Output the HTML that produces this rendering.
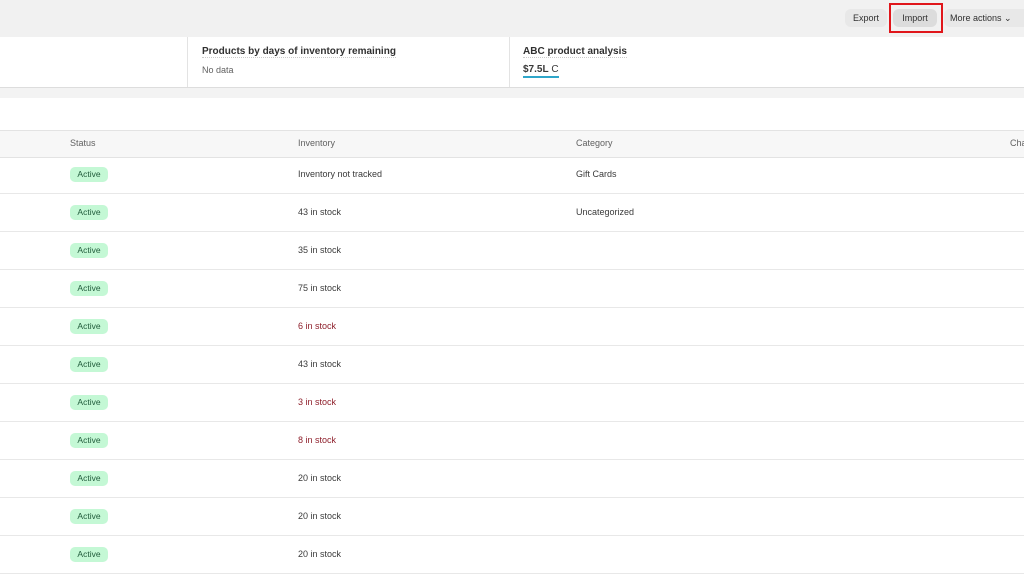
<!DOCTYPE html>
<html><head><style>
body{margin:0;width:1024px;height:574px;overflow:hidden;background:#fff;font-family:"Liberation Sans",sans-serif;font-size:9px;color:#3a3a3a;position:relative}
.a{position:absolute}
.top{left:0;top:0;width:1024px;height:37px;background:#f1f1f1}
.btn{position:absolute;top:9px;height:18px;line-height:18px;border-radius:6px;background:#e3e3e3;font-size:9px;color:#303030;text-align:center}
.card{left:0;top:37px;width:1024px;height:50px;background:#fff;border-bottom:1px solid #ddd}
.gap{left:0;top:88px;width:1024px;height:10px;background:#f3f3f3}
.hdr{left:0;top:130px;width:1024px;height:26px;background:#f7f7f7;border-top:1px solid #e3e3e3;border-bottom:1px solid #e3e3e3}
.row{position:absolute;left:0;width:1024px;height:37px;border-bottom:1px solid #e8e8e8}
.badge{position:absolute;left:70px;top:11px;width:38px;height:15px;line-height:15px;border-radius:5px;background:#c4f8d5;color:#1f5a3a;text-align:center;font-size:8.5px}
.t{position:absolute;top:13px}
.red{color:#8e1f2b}
</style></head><body>
<div class="a top"></div>
<div class="btn" style="left:845px;width:42px;background:#e8e8e8">Export</div>
<div class="btn" style="left:893px;width:44px;background:#dcdcdc">Import</div>
<div class="btn" style="left:944px;width:80px;background:#e8e8e8;text-align:left;padding-left:6px">More actions ⌄</div>
<div class="a" style="left:889px;top:3px;width:54px;height:30px;border:2px solid #e0161b;box-sizing:border-box"></div>
<div class="a card"></div>
<div class="a" style="left:187px;top:37px;width:1px;height:50px;background:#e3e3e3"></div>
<div class="a" style="left:509px;top:37px;width:1px;height:50px;background:#e3e3e3"></div>
<div class="a" style="left:202px;top:46px;font-weight:bold;font-size:10px;color:#303030;border-bottom:1px dotted #ccc">Products by days of inventory remaining</div>
<div class="a" style="left:202px;top:65px;color:#616161">No data</div>
<div class="a" style="left:523px;top:46px;font-weight:bold;font-size:10px;color:#303030;border-bottom:1px dotted #ccc">ABC product analysis</div>
<div class="a" style="left:523px;top:64px;font-size:10px;border-bottom:2px solid #2fa6c9;padding-bottom:1px"><b>$7.5L</b> C</div>
<div class="a gap"></div>
<div class="a hdr"></div>
<div class="a" style="left:70px;top:138px;color:#616161">Status</div>
<div class="a" style="left:298px;top:138px;color:#616161">Inventory</div>
<div class="a" style="left:576px;top:138px;color:#616161">Category</div>
<div class="a" style="left:1010px;top:138px;color:#616161">Cha</div>
<div class="row" style="top:156px"><div class="badge">Active</div><div class="t" style="left:298px">Inventory not tracked</div><div class="t" style="left:576px">Gift Cards</div></div>
<div class="row" style="top:194px"><div class="badge">Active</div><div class="t" style="left:298px">43 in stock</div><div class="t" style="left:576px">Uncategorized</div></div>
<div class="row" style="top:232px"><div class="badge">Active</div><div class="t" style="left:298px">35 in stock</div></div>
<div class="row" style="top:270px"><div class="badge">Active</div><div class="t" style="left:298px">75 in stock</div></div>
<div class="row" style="top:308px"><div class="badge">Active</div><div class="t red" style="left:298px">6 in stock</div></div>
<div class="row" style="top:346px"><div class="badge">Active</div><div class="t" style="left:298px">43 in stock</div></div>
<div class="row" style="top:384px"><div class="badge">Active</div><div class="t red" style="left:298px">3 in stock</div></div>
<div class="row" style="top:422px"><div class="badge">Active</div><div class="t red" style="left:298px">8 in stock</div></div>
<div class="row" style="top:460px"><div class="badge">Active</div><div class="t" style="left:298px">20 in stock</div></div>
<div class="row" style="top:498px"><div class="badge">Active</div><div class="t" style="left:298px">20 in stock</div></div>
<div class="row" style="top:536px"><div class="badge">Active</div><div class="t" style="left:298px">20 in stock</div></div>
</body></html>
